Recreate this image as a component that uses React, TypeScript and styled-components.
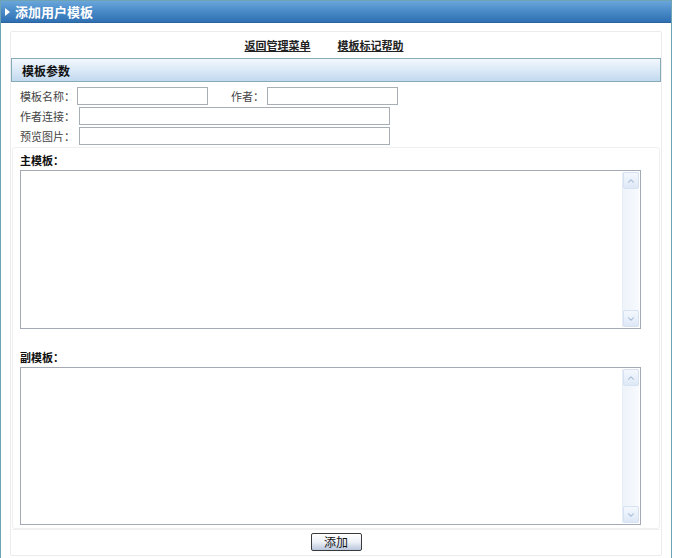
import React from 'react';
import styled, { createGlobalStyle } from 'styled-components';
import { ChevronUp, ChevronDown } from 'lucide-react';

const GlobalStyle = createGlobalStyle`
    html, body {
        margin: 0;
        padding: 0;
        background: #ffffff;
    }
    body {
        font-family: "Noto Sans CJK SC", "Liberation Sans", sans-serif;
        font-size: 12px;
        color: #333;
    }
`;

const Frame = styled.div`
    width: 672px;
    height: 558px;
    box-sizing: border-box;
    border: 1px solid #6ea3b6;
    border-bottom: none;
    display: flex;
    flex-direction: column;
`;

const TitleBar = styled.div`
    height: 21px;
    display: flex;
    align-items: center;
    gap: 5px;
    padding-left: 4px;
    background: linear-gradient(to bottom, #6aa6da 0%, #4b8cc9 45%, #2f70b3 100%);
    border-bottom: 1px solid #2a63a0;
    color: #fff;
    font-size: 13px;
    font-weight: bold;
`;

const Arrow = styled.span`
    width: 0;
    height: 0;
    border-top: 4px solid transparent;
    border-bottom: 4px solid transparent;
    border-left: 5px solid #fff;
`;

const Body = styled.div`
    padding: 8px 9px 0 9px;
`;

const Panel = styled.div`
    border: 1px solid #ececec;
    border-radius: 2px;
`;

const LinkRow = styled.div`
    height: 26px;
    display: flex;
    align-items: center;
    justify-content: center;
    gap: 27px;
    padding-right: 24px;
    font-size: 11px;
`;

const NavLink = styled.a`
    color: #222;
    font-weight: bold;
    text-decoration: underline;
    cursor: pointer;
`;

const SectionHead = styled.div`
    height: 22px;
    display: flex;
    align-items: center;
    padding-left: 10px;
    border: 1px solid #86aab6;
    background: linear-gradient(to bottom, #f2f8fd 0%, #dbe9f7 50%, #c2d9ef 100%);
    font-weight: bold;
    color: #111;
`;

const Fields = styled.div`
    padding: 4px 0 0 9px;
    display: flex;
    flex-direction: column;
    gap: 1px;
`;

const FieldRow = styled.div`
    display: flex;
    align-items: center;
    height: 19px;
`;

const Label = styled.span<{ $w: number; $ml?: number }>`
    width: ${p => p.$w}px;
    margin-left: ${p => p.$ml ?? 0}px;
    flex-shrink: 0;
    white-space: nowrap;
    font-size: 11px;
    color: #444;
`;

const TextInput = styled.input<{ $w: number }>`
    width: ${p => p.$w}px;
    height: 18px;
    box-sizing: border-box;
    border: 1px solid #a7aeb6;
    padding: 0 3px;
    font-size: 12px;
    outline: none;
`;

const EditorBox = styled.div`
    margin: 2px 1px 0;
    padding: 4px 7px 3px;
    border: 1px solid #f0f0f0;
    border-radius: 3px;
`;

const EditorTitle = styled.div<{ $mt?: number }>`
    margin-top: ${p => p.$mt ?? 0}px;
    margin-bottom: 2px;
    line-height: 16px;
    font-size: 11px;
    font-weight: bold;
    color: #111;
`;

const AreaWrap = styled.div<{ $h: number }>`
    width: 621px;
    height: ${p => p.$h}px;
    box-sizing: border-box;
    border: 1px solid #a3aab3;
    display: flex;
    background: #fff;
`;

const Area = styled.textarea`
    flex: 1;
    border: none;
    resize: none;
    outline: none;
    overflow: hidden;
    font-size: 12px;
    padding: 2px;
`;

const ScrollTrack = styled.div`
    width: 16px;
    margin: 1px 1px 1px 0;
    display: flex;
    flex-direction: column;
    justify-content: space-between;
    background: linear-gradient(to right, #eef3fa, #f7fafe);
    border-left: 1px solid #e6edf6;
`;

const ScrollBtn = styled.div`
    height: 15px;
    display: flex;
    align-items: center;
    justify-content: center;
    border: 1px solid #d6e2f2;
    border-radius: 2px;
    background: linear-gradient(to bottom, #f4f8fe, #dde8f6);
    color: #9db4d4;
`;

const Footer = styled.div`
    display: flex;
    justify-content: center;
    padding: 3px 0 4px;
    border-top: 1px solid #f0f0f0;
    margin: 0 1px;
`;

const SubmitButton = styled.button`
    width: 51px;
    height: 18px;
    padding: 0;
    border: 1px solid #3a3a3a;
    border-radius: 2px;
    background: linear-gradient(to bottom, #ffffff 0%, #eef1f7 50%, #b9c6dc 100%);
    font-family: "Noto Sans CJK SC", "Liberation Sans", sans-serif;
    font-size: 12px;
    line-height: 14px;
    color: #111;
`;

const Editor: React.FC<{ height: number }> = ({ height }) => (
    <AreaWrap $h={height}>
        <Area />
        <ScrollTrack>
            <ScrollBtn><ChevronUp size={10} strokeWidth={2.5} /></ScrollBtn>
            <ScrollBtn><ChevronDown size={10} strokeWidth={2.5} /></ScrollBtn>
        </ScrollTrack>
    </AreaWrap>
);

const App: React.FC = () => {
    return (
        <>
            <GlobalStyle />
            <Frame>
                <TitleBar>
                    <Arrow />
                    添加用户模板
                </TitleBar>
                <Body>
                    <Panel>
                        <LinkRow>
                            <NavLink>返回管理菜单</NavLink>
                            <NavLink>模板标记帮助</NavLink>
                        </LinkRow>
                        <SectionHead>模板参数</SectionHead>
                        <Fields>
                            <FieldRow>
                                <Label $w={57}>模板名称：</Label>
                                <TextInput $w={131} />
                                <Label $w={36} $ml={23}>作者：</Label>
                                <TextInput $w={131} />
                            </FieldRow>
                            <FieldRow>
                                <Label $w={59}>作者连接：</Label>
                                <TextInput $w={311} />
                            </FieldRow>
                            <FieldRow>
                                <Label $w={59}>预览图片：</Label>
                                <TextInput $w={311} />
                            </FieldRow>
                        </Fields>
                        <EditorBox>
                            <EditorTitle>主模板：</EditorTitle>
                            <Editor height={159} />
                            <EditorTitle $mt={20}>副模板：</EditorTitle>
                            <Editor height={158} />
                        </EditorBox>
                        <Footer>
                            <SubmitButton>添加</SubmitButton>
                        </Footer>
                    </Panel>
                </Body>
            </Frame>
        </>
    );
};

export default App;
